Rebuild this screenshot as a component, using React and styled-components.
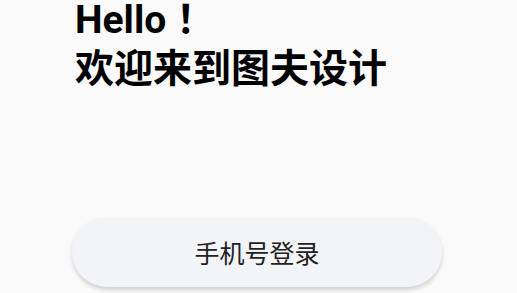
import React from 'react'
import styled, { createGlobalStyle } from 'styled-components'

const GlobalStyle = createGlobalStyle`
  html, body {
    margin: 0;
    padding: 0;
    background: #fafafa;
  }
  body {
    font-family: Roboto, "Noto Sans CJK SC", sans-serif;
  }
`

const Page = styled.div`
  display: flex;
  flex-direction: column;
  align-items: flex-start;
  min-height: 293px;
  padding: 0 0 0 72px;
  box-sizing: border-box;
`

const Greeting = styled.h1`
  margin: 0;
  padding-left: 3px;
  font-family: Roboto, "Noto Sans CJK SC", sans-serif;
  font-size: 39px;
  font-weight: 700;
  color: #000;
`

const Line = styled.span`
  display: block;
  line-height: ${({ $lh }) => $lh}px;
`

const LoginButton = styled.button`
  margin-top: 119px;
  width: 370px;
  height: 70px;
  border: none;
  border-radius: 35px;
  background: #f3f4f8;
  box-shadow: 0 3px 4px rgba(0, 0, 0, 0.16);
  font-family: "Noto Sans CJK SC", sans-serif;
  font-size: 25px;
  color: #222;
  cursor: pointer;
`

const App = () => {
  return (
    <>
      <GlobalStyle />
      <Page>
        <Greeting>
          <Line $lh={41}>Hello ！</Line>
          <Line $lh={57}>欢迎来到图夫设计</Line>
        </Greeting>
        <LoginButton>手机号登录</LoginButton>
      </Page>
    </>
  )
}

export default App
